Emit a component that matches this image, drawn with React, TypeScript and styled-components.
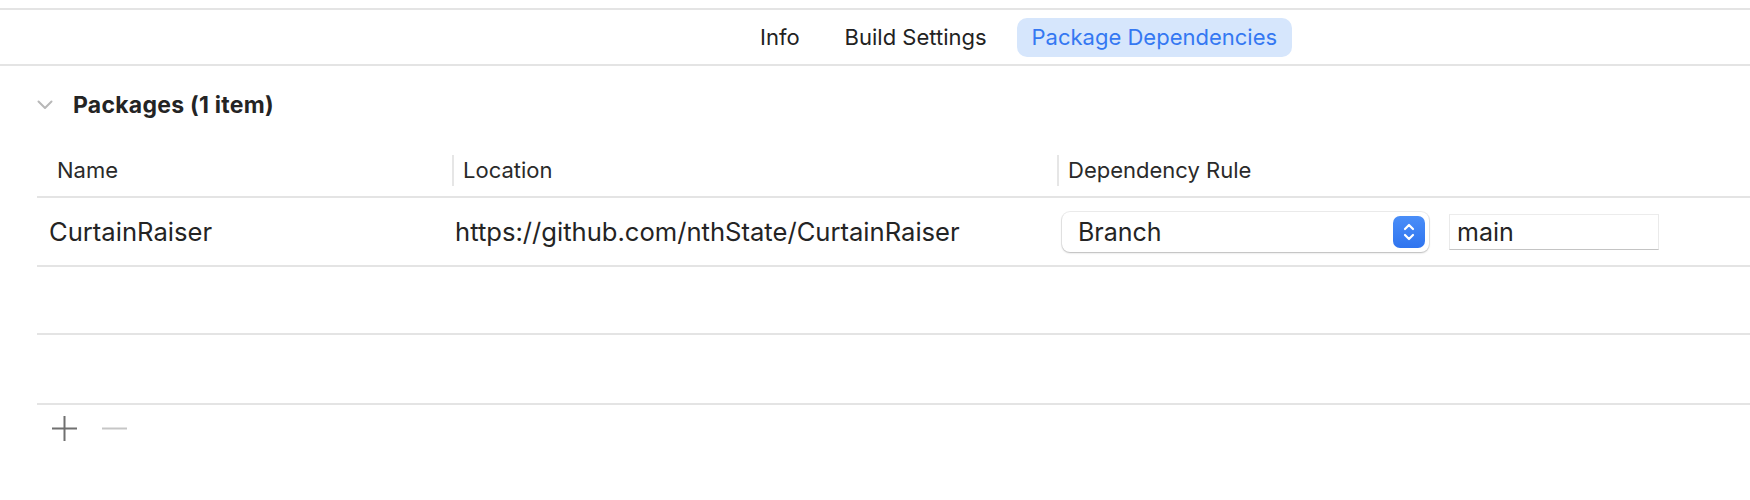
import React from "react";
import styled, { createGlobalStyle } from "styled-components";

const Global = createGlobalStyle`
  html, body { margin: 0; padding: 0; background: #ffffff; }
  body { font-family: Inter, "Noto Sans", sans-serif; color: #262626; -webkit-font-smoothing: antialiased; }
  * { box-sizing: border-box; }
`;

const Page = styled.div`
  width: 1750px;
  height: 500px;
  background: #ffffff;
  padding-top: 8px;
  overflow: hidden;
`;

const TabBar = styled.div`
  height: 58px;
  border-top: 2px solid #e4e4e4;
  border-bottom: 2px solid #e4e4e4;
  display: flex;
  align-items: center;
  gap: 15px;
  padding-left: 745px;
`;

const Tab = styled.div<{ $active?: boolean }>`
  height: 39px;
  padding: 0 15px;
  display: flex;
  align-items: center;
  border-radius: 10px;
  font-size: 22px;
  color: ${(p) => (p.$active ? "#3478f2" : "#222222")};
  background: ${(p) => (p.$active ? "#d6e6fc" : "transparent")};
`;

const Section = styled.div`
  padding-left: 37px;
`;

const SectionHeader = styled.div`
  height: 78px;
  display: flex;
  align-items: center;
  gap: 20px;
`;

const SectionTitle = styled.div`
  font-size: 23px;
  font-weight: 700;
  letter-spacing: 0.25px;
  color: #242424;
`;

const Table = styled.div`
  display: flex;
  flex-direction: column;
`;

const Row = styled.div<{ $h: number }>`
  display: grid;
  grid-template-columns: 415px 605px 1fr;
  height: ${(p) => p.$h}px;
  border-bottom: 2px solid #e4e4e4;
  align-items: center;
`;

const HeadCell = styled.div<{ $first?: boolean }>`
  display: flex;
  align-items: center;
  height: 31px;
  padding-left: ${(p) => (p.$first ? 20 : 9)}px;
  border-left: ${(p) => (p.$first ? "none" : "2px solid #e6e6e6")};
  font-size: 22px;
  color: #2a2a2a;
`;

const Cell = styled.div<{ $pad: number }>`
  display: flex;
  align-items: center;
  gap: 20px;
  padding-left: ${(p) => p.$pad}px;
  font-size: 25.6px;
  color: #242424;
  white-space: nowrap;
`;

const Popup = styled.div`
  width: 367px;
  height: 40px;
  border-radius: 8px;
  background: #ffffff;
  box-shadow: 0 0 0 1px rgba(0, 0, 0, 0.07), 0 1px 2px rgba(0, 0, 0, 0.22);
  display: flex;
  align-items: center;
  justify-content: space-between;
  padding: 0 4px 0 16px;
  font-size: 25px;
`;

const Stepper = styled.div`
  width: 32px;
  height: 32px;
  border-radius: 7px;
  background: linear-gradient(#4a8ef8, #2f74ef);
  display: flex;
  align-items: center;
  justify-content: center;
`;

const TextField = styled.div`
  width: 210px;
  height: 36px;
  background: #ffffff;
  border-top: 1px solid #ececec;
  border-left: 1px solid #eaeaea;
  border-right: 1px solid #eaeaea;
  border-bottom: 1px solid #c4c4c4;
  display: flex;
  align-items: center;
  padding-left: 7px;
  font-size: 25px;
`;

const Footer = styled.div`
  display: flex;
  align-items: center;
  gap: 23px;
  padding-left: 14px;
  height: 46px;
`;

const Chevron = () => (
  <svg width="16" height="10" viewBox="0 0 16 10">
    <polyline points="1.5,1.5 8,8 14.5,1.5" fill="none" stroke="#b8b8b8" strokeWidth="2" strokeLinecap="round" strokeLinejoin="round" />
  </svg>
);

const UpDown = () => (
  <svg width="14" height="22" viewBox="0 0 14 22">
    <polyline points="3,8 7,4 11,8" fill="none" stroke="#ffffff" strokeWidth="2.2" strokeLinecap="round" strokeLinejoin="round" />
    <polyline points="3,14 7,18 11,14" fill="none" stroke="#ffffff" strokeWidth="2.2" strokeLinecap="round" strokeLinejoin="round" />
  </svg>
);

const Plus = () => (
  <svg width="27" height="27" viewBox="0 0 27 27">
    <path d="M13.5 1 V26 M1 13.5 H26" stroke="#707070" strokeWidth="2" />
  </svg>
);

const Minus = () => (
  <svg width="27" height="27" viewBox="0 0 27 27">
    <path d="M1 13.5 H26" stroke="#c6c6c6" strokeWidth="2" />
  </svg>
);

export default function App() {
  return (
    <Page>
      <Global />
      <TabBar>
        <Tab>Info</Tab>
        <Tab>Build Settings</Tab>
        <Tab $active>Package Dependencies</Tab>
      </TabBar>
      <Section>
        <SectionHeader>
          <Chevron />
          <SectionTitle>Packages (1 item)</SectionTitle>
        </SectionHeader>
        <Table>
          <Row $h={54}>
            <HeadCell $first>Name</HeadCell>
            <HeadCell>Location</HeadCell>
            <HeadCell>Dependency Rule</HeadCell>
          </Row>
          <Row $h={69}>
            <Cell $pad={12}>CurtainRaiser</Cell>
            <Cell $pad={3}>https://github.com/nthState/CurtainRaiser</Cell>
            <Cell $pad={5}>
              <Popup>
                Branch
                <Stepper>
                  <UpDown />
                </Stepper>
              </Popup>
              <TextField>main</TextField>
            </Cell>
          </Row>
          <Row $h={68} />
          <Row $h={70} />
        </Table>
        <Footer>
          <Plus />
          <Minus />
        </Footer>
      </Section>
    </Page>
  );
}
